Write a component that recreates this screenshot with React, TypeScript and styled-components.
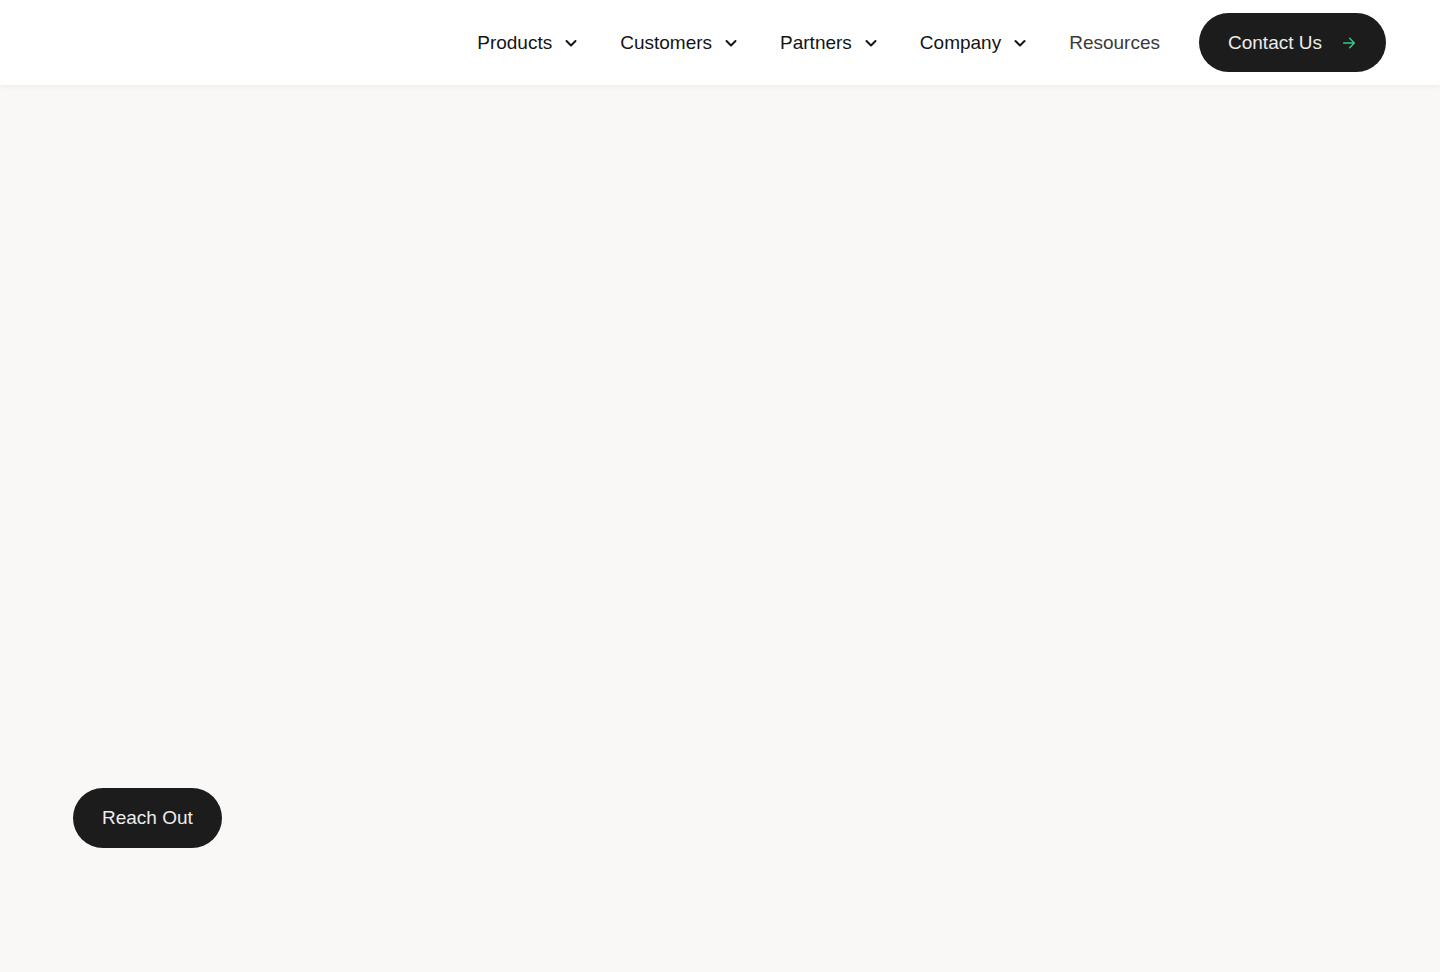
import styled, { createGlobalStyle } from "styled-components";

const GlobalStyle = createGlobalStyle`
  html, body {
    margin: 0;
    padding: 0;
    background: #f9f8f6;
    font-family: "Liberation Sans", Arial, sans-serif;
  }
  * { box-sizing: border-box; }
`;

const Header = styled.header`
  height: 85px;
  background: #ffffff;
  display: flex;
  align-items: center;
  justify-content: flex-end;
  padding: 0 54px 0 0;
  box-shadow: 0 1px 6px rgba(0, 0, 0, 0.06);
  position: relative;
  z-index: 1;
`;

const Nav = styled.nav`
  display: flex;
  align-items: center;
  gap: 42px;
  margin-right: 39px;
`;

const NavItem = styled.a<{ $muted?: boolean }>`
  display: flex;
  align-items: center;
  gap: 12px;
  font-size: 19px;
  color: ${(p) => (p.$muted ? "#3a3a3a" : "#141414")};
  text-decoration: none;
  cursor: pointer;
`;

const PillButton = styled.button`
  display: inline-flex;
  align-items: center;
  gap: 19px;
  height: 59px;
  padding: 0 29px;
  border: none;
  border-radius: 999px;
  background: #1c1c1c;
  color: #ececec;
  font-family: inherit;
  font-size: 19px;
  cursor: pointer;
`;

const Main = styled.main`
  min-height: calc(100vh - 85px);
  display: flex;
  flex-direction: column;
  justify-content: flex-end;
  padding: 0 73px 124px;
`;

const ReachButton = styled(PillButton)`
  height: 60px;
  align-self: flex-start;
`;

const Chevron = () => (
  <svg width="14" height="14" viewBox="0 0 14 14" fill="none" stroke="#141414" strokeWidth="2" strokeLinecap="round" strokeLinejoin="round">
    <path d="M2.5 5l4.5 4.5L11.5 5" />
  </svg>
);

const Arrow = () => (
  <svg width="16" height="16" viewBox="0 0 24 24" fill="none" stroke="#34c88a" strokeWidth="2.2" strokeLinecap="round" strokeLinejoin="round">
    <path d="M4 12h16M13 5l7 7-7 7" />
  </svg>
);

const links = [
  { label: "Products", menu: true },
  { label: "Customers", menu: true },
  { label: "Partners", menu: true },
  { label: "Company", menu: true },
  { label: "Resources", menu: false },
];

export default function App() {
  return (
    <>
      <GlobalStyle />
      <Header>
        <Nav>
          {links.map((l) => (
            <NavItem key={l.label} $muted={!l.menu}>
              {l.label}
              {l.menu && <Chevron />}
            </NavItem>
          ))}
        </Nav>
        <PillButton>
          Contact Us
          <Arrow />
        </PillButton>
      </Header>
      <Main>
        <ReachButton>Reach Out</ReachButton>
      </Main>
    </>
  );
}
